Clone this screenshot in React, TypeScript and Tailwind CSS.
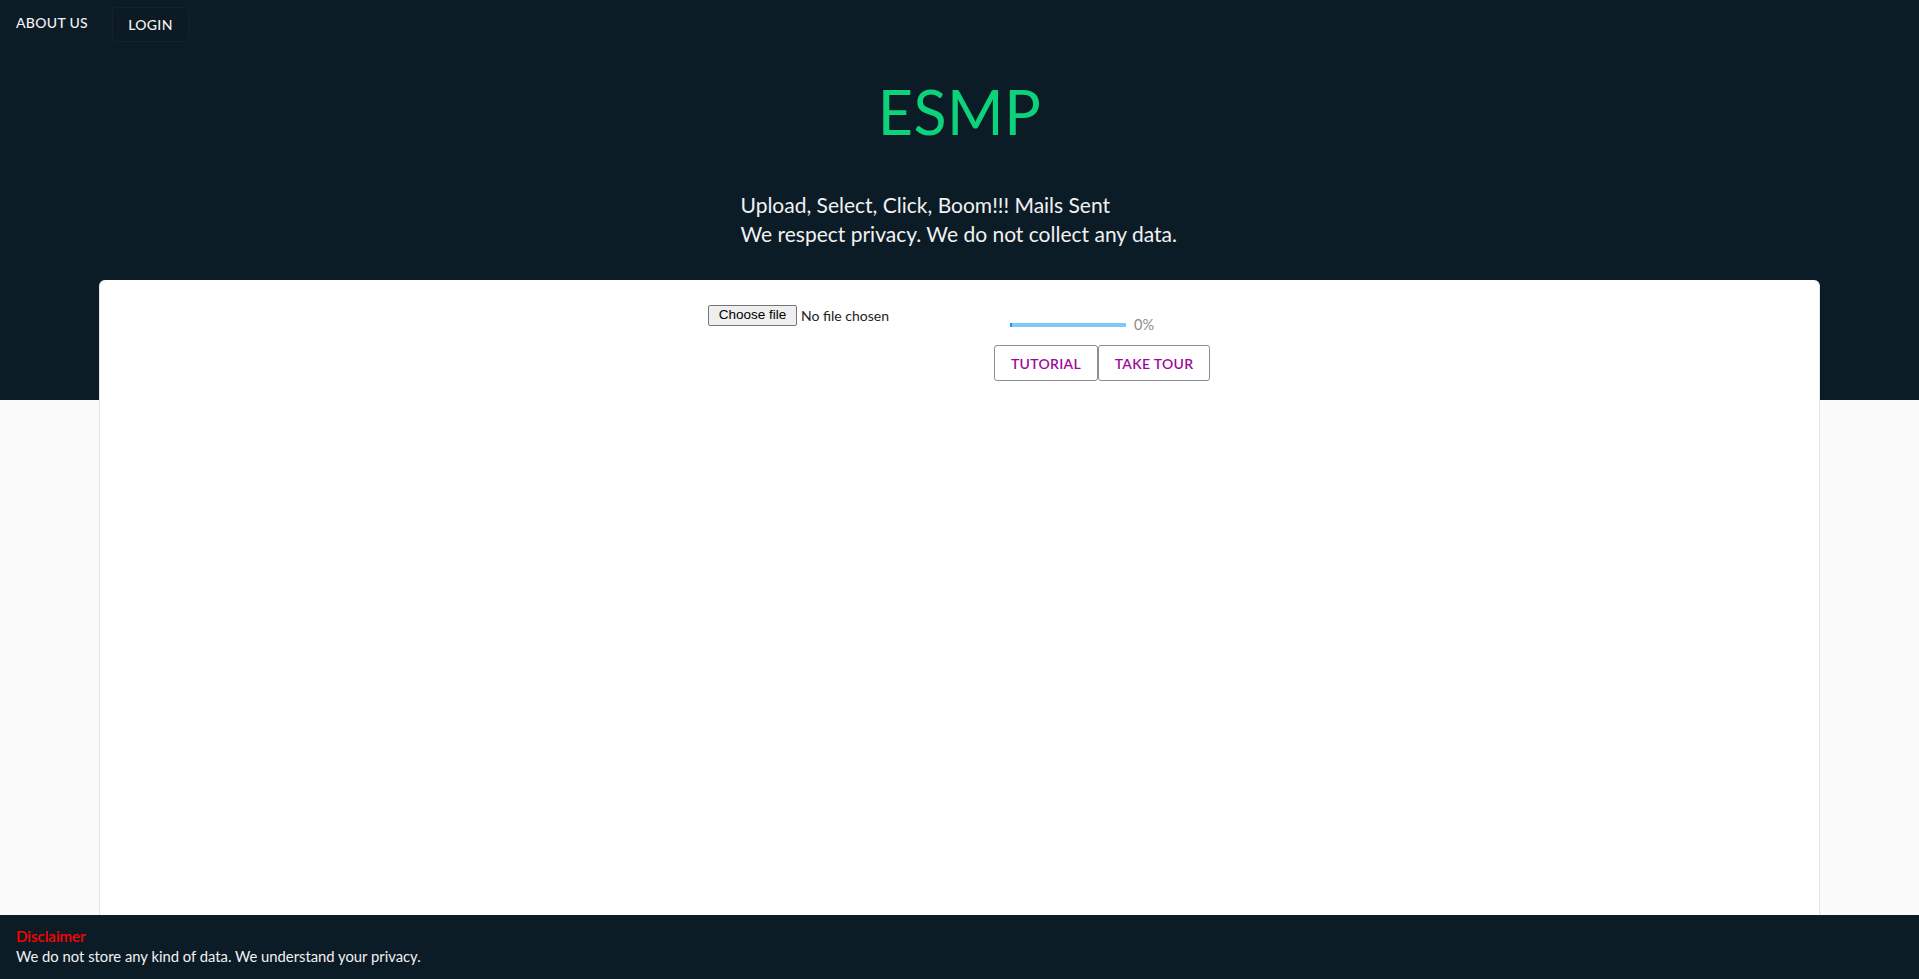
import React from "react";

export default function App() {
  const font = { fontFamily: "Lato, 'Noto Sans', 'Open Sans', sans-serif" };
  return (
    <div className="h-[979px] w-full overflow-hidden flex flex-col bg-[#fafafa]" style={font}>
      <header className="h-[400px] shrink-0 bg-[#0c1c26] flex flex-col">
        <nav className="h-[48px] flex items-center">
          <a className="pl-[16px] pr-[24px] text-[14px] font-medium text-[#f2f2f2] tracking-[0.3px] leading-[48px] -mt-[2px]">ABOUT US</a>
          <a className="w-[77px] h-[35px] flex items-center justify-center rounded-[4px] bg-[#0b1a23] border border-[#13232d] text-[14px] font-medium text-[#f2f2f2] tracking-[0.3px]">LOGIN</a>
        </nav>
        <h1 className="mt-[34px] text-center text-[61px] leading-[60px] font-normal text-[#0cd37b] tracking-[0.5px]">ESMP</h1>
        <div className="mt-[48px] flex justify-center">
          <div className="text-left text-[21px] leading-[29px] text-[#f1f1f1] w-[438px]">
            <p>Upload, Select, Click, Boom!!! Mails Sent</p>
            <p>We respect privacy. We do not collect any data.</p>
          </div>
        </div>
      </header>
      <main className="-mt-[120px] mx-[99px] flex-1 bg-white rounded-t-[6px] border-x border-[#e3e3e3] border-t-0">
        <div className="flex pt-[25px] pl-[608px]">
          <div className="w-[286px] flex items-center h-[21px]">
            <span
              className="h-[21px] w-[89px] flex items-center justify-center bg-[#efefef] border border-[#767676] rounded-[2px] text-[13.5px] text-black"
              style={{ fontFamily: "'Liberation Sans', Arial, sans-serif" }}
            >
              Choose file
            </span>
            <span className="ml-[4px] text-[14px] text-[#222]">No file chosen</span>
          </div>
          <div className="flex flex-col">
            <div className="flex items-center pl-[16px] mt-[13px] h-[14px]">
              <div className="w-[116px] h-[4px] bg-[#7cc9fb] flex">
                <div className="w-[2px] h-full bg-[#1e90ff]" />
              </div>
              <span className="ml-[8px] text-[14.5px] text-[#8c8c8c]">0%</span>
            </div>
            <div className="flex mt-[13px]">
              <button className="w-[104px] h-[36px] border border-[#8a8f94] rounded-[3px] text-[14px] font-semibold text-[#9b0a9b] bg-white tracking-[0.3px]">TUTORIAL</button>
              <button className="w-[112px] h-[36px] border border-[#8a8f94] rounded-[3px] text-[14px] font-semibold text-[#9b0a9b] bg-white tracking-[0.3px]">TAKE TOUR</button>
            </div>
          </div>
        </div>
      </main>
      <footer className="h-[64px] shrink-0 bg-[#0c1c26] px-[16px] pt-[11px]">
        <p className="text-[15px] leading-[20px] font-semibold text-[#ff0000]">Disclaimer</p>
        <p className="text-[14.8px] leading-[20px] text-[#f1f1f1]">We do not store any kind of data. We understand your privacy.</p>
      </footer>
    </div>
  );
}
